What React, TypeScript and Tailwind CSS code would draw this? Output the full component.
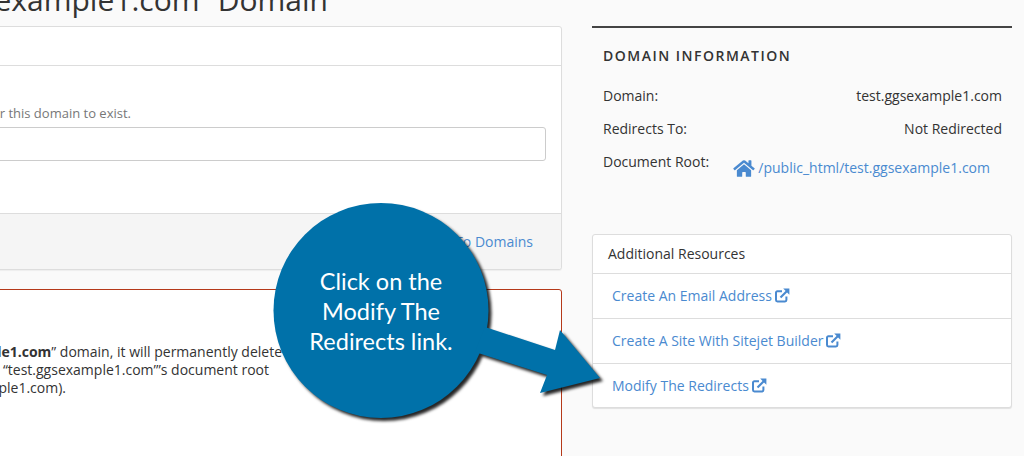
import { FaHome } from 'react-icons/fa';

const links = ['Create An Email Address', 'Create A Site With Sitejet Builder', 'Modify The Redirects'];

function ExternalIcon() {
  return (
    <svg width="15" height="15" viewBox="0 0 15 15" className="shrink-0">
      <path d="M7 3.2 H2.4 a1.4 1.4 0 0 0 -1.4 1.4 V12 a1.4 1.4 0 0 0 1.4 1.4 H10 a1.4 1.4 0 0 0 1.4 -1.4 V8.5" fill="none" stroke="currentColor" strokeWidth="2" />
      <path d="M5.5 9.5 L12 3" fill="none" stroke="currentColor" strokeWidth="2.2" />
      <path d="M8.2 0.6 H14.4 V6.8 Z" fill="currentColor" />
    </svg>
  );
}

function Callout() {
  return (
    <div className="absolute left-[260px] top-[190px] h-[220px] w-[360px]">
      <svg width="360" height="220" viewBox="0 0 360 220" className="absolute left-0 top-0 overflow-visible drop-shadow-[3px_3px_1.5px_rgba(0,0,0,0.85)]">
        <circle cx="121" cy="120.5" r="107.5" fill="#0071a9" />
        <path d="M225 137 L295 160 L300 140 L340 188 L280 203 L287 185 L215 162 Z" fill="#0071a9" />
      </svg>
      <div className="absolute left-[11px] top-[76px] w-[220px] text-center font-['Lato',sans-serif] text-[23.5px] leading-[30px] text-white">
        <div>Click on the</div>
        <div>Modify The</div>
        <div>Redirects link.</div>
      </div>
    </div>
  );
}

export default function App() {
  return (
    <div className="relative flex h-[456px] w-[1024px] overflow-hidden bg-[#fafafa] text-[14px] text-[#333] font-['Open_Sans',sans-serif]">
      {/* left column, cut off by the window */}
      <div className="w-[562px] shrink-0">
        <div className="flex h-[26px] items-end justify-end whitespace-nowrap pb-[6px] pr-[234px] text-[30px] leading-[40px] text-[#333]">
          Manage the “test.ggsexample1.com” Domain
        </div>

        <div className="-ml-[10px] rounded-[3px] border border-[#ddd] bg-white shadow-[0_1px_1px_rgba(0,0,0,0.05)]">
          <div className="h-[39px] border-b border-[#ddd]" />
          <div className="h-[147px] pr-[15px] pt-[38px]">
            <div className="flex justify-end whitespace-nowrap pr-[415px] text-[13px] leading-[18px] text-[#777]">
              The document root must be empty for this domain to exist.
            </div>
            <div className="mt-[5px] h-[34px] rounded-[3px] border border-[#ccc] bg-white" />
          </div>
          <div className="flex h-[56px] items-center justify-end rounded-b-[3px] border-t border-[#ddd] bg-[#f5f5f5] pr-[28px] text-[#4a8ad0]">
            Return To Domains
          </div>
        </div>

        <div className="-ml-[10px] mt-[19px] h-[200px] rounded-[3px] border border-[#b5391a] bg-white pt-[53px]">
          <div className="flex flex-col items-end whitespace-nowrap leading-[18px]">
            <div className="pr-[279px]">
              If you remove the “test.gg<strong className="font-bold">sexample1.com</strong>” domain, it will permanently delete
            </div>
            <div className="pr-[292px]">the domain from the server and “test.ggsexample1.com”’s document root</div>
            <div className="pr-[495px]">(/public_html/test.ggsexample1.com).</div>
          </div>
        </div>
      </div>

      {/* right column */}
      <div className="ml-[30px] w-[420px] shrink-0 pt-[26px]">
        <div className="h-[190px] border-t-2 border-[#444] pl-[11px] pr-[10px]">
          <h2 className="mt-[18px] text-[14px] font-semibold uppercase leading-[20px] tracking-[1.5px] text-[#333]">
            Domain Information
          </h2>
          <div className="mt-[20px] flex justify-between leading-[20px]">
            <span>Domain:</span>
            <span>test.ggsexample1.com</span>
          </div>
          <div className="mt-[13px] flex justify-between leading-[20px]">
            <span>Redirects To:</span>
            <span>Not Redirected</span>
          </div>
          <div className="mt-[13px] flex justify-between leading-[20px]">
            <span>Document Root:</span>
            <span className="mr-[12px] mt-[6px] flex items-center gap-[3px] text-[#4a8ad0]">
              <FaHome className="h-[19px] w-[22px]" />
              /public_html/test.ggsexample1.com
            </span>
          </div>
        </div>

        <div className="mt-[18px] rounded-[3px] border border-[#ddd] bg-white shadow-[0_1px_1px_rgba(0,0,0,0.1)]">
          <div className="flex h-[38px] items-center px-[15px] pb-[2px]">Additional Resources</div>
          {links.map((link) => (
            <div key={link} className="flex h-[45px] items-center gap-[3px] border-t border-[#ddd] px-[19px] pb-[2px] text-[#4a8ad0] last:h-[44px] last:pb-0">
              {link}
              <ExternalIcon />
            </div>
          ))}
        </div>
      </div>

      <Callout />
    </div>
  );
}
